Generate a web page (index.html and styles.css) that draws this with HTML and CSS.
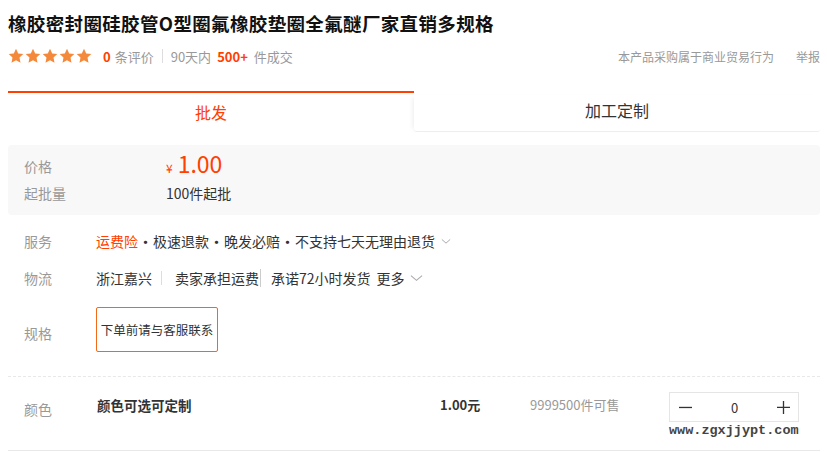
FILE: index.html
```html
<!DOCTYPE html>
<html lang="zh">
<head>
<meta charset="utf-8">
<link rel="stylesheet" href="styles.css">
</head>
<body>
<div class="page">
  <h1 class="title">橡胶密封圈硅胶管O型圈氟橡胶垫圈全氟醚厂家直销多规格</h1>
  <div class="meta">
    <div class="meta-left">
      <span class="stars">
        <svg viewBox="0 0 16 16" class="star"><path d="M8 .8l2.2 4.7 5.1.6-3.8 3.5 1 5.1L8 12.2l-4.5 2.5 1-5.1L.7 6.1l5.1-.6z"/></svg>
        <svg viewBox="0 0 16 16" class="star"><path d="M8 .8l2.2 4.7 5.1.6-3.8 3.5 1 5.1L8 12.2l-4.5 2.5 1-5.1L.7 6.1l5.1-.6z"/></svg>
        <svg viewBox="0 0 16 16" class="star"><path d="M8 .8l2.2 4.7 5.1.6-3.8 3.5 1 5.1L8 12.2l-4.5 2.5 1-5.1L.7 6.1l5.1-.6z"/></svg>
        <svg viewBox="0 0 16 16" class="star"><path d="M8 .8l2.2 4.7 5.1.6-3.8 3.5 1 5.1L8 12.2l-4.5 2.5 1-5.1L.7 6.1l5.1-.6z"/></svg>
        <svg viewBox="0 0 16 16" class="star"><path d="M8 .8l2.2 4.7 5.1.6-3.8 3.5 1 5.1L8 12.2l-4.5 2.5 1-5.1L.7 6.1l5.1-.6z"/></svg>
      </span>
      <span class="num">0</span><span class="gray">条评价</span>
      <span class="sep"></span>
      <span class="gray">90天内</span><span class="num big">500+</span><span class="gray">件成交</span>
    </div>
    <div class="meta-right">
      <span>本产品采购属于商业贸易行为</span>
      <span>举报</span>
    </div>
  </div>

  <div class="tabs">
    <div class="tab active">批发</div>
    <div class="tab other">加工定制</div>
  </div>

  <div class="pricebox">
    <div class="prow">
      <span class="plabel">价格</span>
      <span class="price"><span class="yen">¥</span>1.00</span>
    </div>
    <div class="prow">
      <span class="plabel">起批量</span>
      <span class="pval">100件起批</span>
    </div>
  </div>

  <div class="row service">
    <span class="label">服务</span>
    <div class="content">
      <span class="orange">运费险</span><span class="dot">·</span>极速退款<span class="dot">·</span>晚发必赔<span class="dot">·</span>不支持七天无理由退货
      <svg class="chev" viewBox="0 0 12 8"><path d="M1 1.5l5 4.5 5-4.5" fill="none" stroke="#aaa" stroke-width="1.2"/></svg>
    </div>
  </div>
  <div class="row logistic">
    <span class="label">物流</span>
    <div class="content">
      <span>浙江嘉兴</span><span class="vsep"></span><span class="seller">卖家承担运费</span><span class="vsep2"></span><span>承诺72小时发货</span><span class="more">更多</span>
      <svg class="chev big" viewBox="0 0 14 8"><path d="M1 1.5l6 5 6-5" fill="none" stroke="#aaa" stroke-width="1.2"/></svg>
    </div>
  </div>
  <div class="row spec">
    <span class="label">规格</span>
    <div class="specbox">下单前请与客服联系</div>
  </div>

  <div class="sku">
    <span class="label">颜色</span>
    <span class="skuname">颜色可选可定制</span>
    <span class="skuprice">1.00元</span>
    <span class="stock">9999500件可售</span>
    <div class="stepwrap">
      <div class="stepper">
        <svg class="op" viewBox="0 0 14 14"><path d="M0 7.5h14" stroke="#333" stroke-width="1.4"/></svg>
        <span class="qty">0</span>
        <svg class="op" viewBox="0 0 14 14"><path d="M0 7.5h14M7 0.5v14" stroke="#333" stroke-width="1.4"/></svg>
      </div>
      <div class="wm">www.zgxjjypt.com</div>
    </div>
  </div>
</div>
</body>
</html>
```

FILE: styles.css
```css
* { box-sizing: border-box; }
body {
  margin: 0;
  padding: 0 7px 0 8px;
  font-family: "Noto Sans CJK SC", "Liberation Sans", sans-serif;
  color: #333;
  background: #fff;
  overflow: hidden;
}
.page { width: 812px; }
.title {
  margin: 0;
  padding-top: 10px;
  font-size: 18.5px;
  line-height: 26px;
  font-weight: bold;
  color: #111;
  letter-spacing: 0.35px;
}
.meta {
  display: flex;
  justify-content: space-between;
  align-items: center;
  height: 20px;
  margin-top: 10px;
  font-size: 13px;
}
.meta-left { display: flex; align-items: center; }
.stars { display: flex; gap: 1px; margin-right: 11px; }
.star { width: 16px; height: 16px; fill: #f4883b; }
.num { color: #ff4000; font-weight: bold; margin-right: 4px; }
.num.big { margin-left: 6px; margin-right: 6px; }
.gray { color: #999; }
.sep { width: 1px; height: 14px; background: #ddd; margin: 0 8px; }
.meta-right { display: flex; gap: 22px; font-size: 12px; color: #999; margin-right: 0; }

.tabs {
  display: flex;
  margin-top: 25px;
  height: 42px;
}
.tab {
  flex: 1;
  display: flex;
  align-items: center;
  justify-content: center;
  font-size: 16px;
}
.tab.active {
  color: #ff4000;
  border-top: 2px solid #ff4000;
  padding-bottom: 2px;
}
.tab.other {
  margin-top: 4px;
  height: 37px;
  color: #333;
  border-bottom: 1px solid #eee;
  border-radius: 3px;
  box-shadow: -4px 0 5px -3px rgba(0,0,0,0.08);
  padding-bottom: 6px;
}

.pricebox {
  margin-top: 12px;
  background: #f8f8f8;
  border-radius: 4px;
  padding: 7px 16px 6px;
  height: 70px;
}
.prow { display: flex; align-items: center; height: 27px; font-size: 14px; }
.plabel { width: 142px; color: #999; }
.price { color: #ff4000; font-size: 23px; line-height: 27px; }
.yen { font-size: 12px; margin-right: 5px; }
.pval { color: #333; }

.row { display: flex; align-items: center; font-size: 14px; }
.label { width: 88px; padding-left: 16px; color: #999; font-size: 14px; flex: none; }
.content { display: flex; align-items: center; color: #333; }
.service { margin-top: 14px; height: 24px; }
.logistic { margin-top: 13px; height: 24px; }
.orange { color: #ff4000; }
.dot { margin: 0 1px; font-size: 13px; font-weight: bold; }
.chev { width: 10px; height: 7px; margin-left: 6px; }
.chev.big { width: 13px; height: 8px; margin-left: 5px; }
.vsep { width: 1px; height: 14px; background: #ddd; margin: 0 13px 0 9px; }
.vsep2 { width: 1px; height: 18px; background: #ccc; margin: 0 10px 0 1px; }
.more { margin-left: 6px; }
.spec { margin-top: 17px; align-items: center; }
.spec .label { padding-top: 6px; }
.specbox {
  border: 1px solid #f06a1a;
  border-radius: 2px;
  width: 122px;
  height: 45px;
  display: flex;
  align-items: center;
  justify-content: center;
  font-size: 12.5px;
  color: #333;
}

.sku {
  margin-top: 24px;
  border-top: 1px dashed #e8e8e8;
  border-bottom: 1px solid #e8e8e8;
  height: 75px;
  display: flex;
  align-items: flex-start;
  font-size: 13px;
  padding-top: 15px;
}
.sku .label { width: 72px; padding-top: 7px; }
.skuname { width: 360px; font-weight: bold; padding-left: 17px; padding-top: 3px; font-size: 13.5px; }
.skuprice { width: 90px; font-weight: bold; padding-top: 3px; }
.stock { width: 139px; color: #999; padding-top: 3px; }
.stepwrap { display: flex; flex-direction: column; }
.stepper {
  width: 130px;
  height: 30px;
  border: 1px solid #e5e5e5;
  display: flex;
  align-items: center;
  justify-content: space-between;
  padding: 0 8px 0 9px;
  color: #333;
}
.op { width: 13px; height: 14px; }
.qty { font-size: 13px; }
.wm {
  font-family: "Liberation Mono", monospace;
  font-size: 13.5px;
  font-weight: bold;
  color: #444;
  line-height: 16px;
  margin-top: 1px;
  white-space: nowrap;
}
```
